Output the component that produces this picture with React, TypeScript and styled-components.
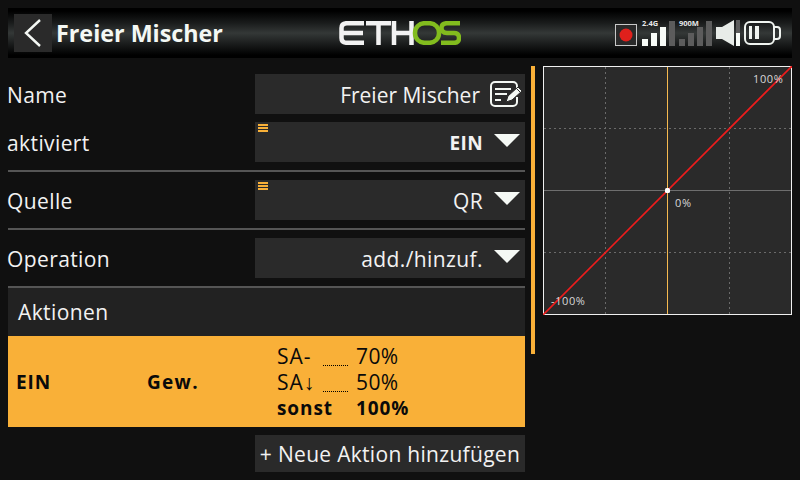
import React from "react";
import styled, { createGlobalStyle } from "styled-components";

const GlobalStyle = createGlobalStyle`
  html, body {
    margin: 0;
    padding: 0;
    background: #101010;
  }
`;

const Screen = styled.div`
  width: 800px;
  height: 480px;
  box-sizing: border-box;
  padding: 8px;
  background: #101010;
  color: #f2f2f2;
  font-family: "Open Sans", "Noto Sans", sans-serif;
  overflow: hidden;
`;

const Header = styled.header`
  display: grid;
  grid-template-columns: 1fr auto 1fr;
  align-items: center;
  height: 50px;
  background: linear-gradient(180deg, #000 0%, #000 6%, #1a1c1c 30%, #343837 50%, #1a1c1c 72%, #000 94%, #000 100%);
`;

const TitleGroup = styled.div`
  display: flex;
  align-items: center;
  gap: 4px;
  padding-left: 6px;
`;

const BackButton = styled.button`
  display: flex;
  align-items: center;
  justify-content: center;
  width: 38px;
  height: 38px;
  padding: 0;
  border: none;
  background: #2a2a2a;
`;

const Title = styled.h1`
  margin: 0;
  font-size: 23.3px;
  font-weight: 700;
  color: #f4f8f4;
`;

const Status = styled.div`
  display: flex;
  align-items: center;
  justify-content: flex-end;
  gap: 4px;
  padding-right: 11px;
`;

const StatusIcon = styled.svg`
  display: block;
  overflow: visible;
`;

const RecordBox = styled(StatusIcon)`
  margin: 3px 1px 0 0;
`;

const StatusLabel = styled.text`
  font-family: "Open Sans", "Noto Sans", sans-serif;
  font-size: 7.5px;
  font-weight: 700;
  fill: #e8e8e8;
`;

const Body = styled.main`
  display: flex;
  margin-top: 8px;
`;

const Form = styled.section`
  width: 517px;
`;

const Row = styled.div<{ $divider?: boolean }>`
  display: flex;
  align-items: center;
  justify-content: space-between;
  padding: ${({ $divider }) => ($divider ? "8px 0" : "8px 0 0")};
  border-bottom: ${({ $divider }) => ($divider ? "2px solid #555" : "none")};
`;

const Label = styled.span`
  margin: 2px 0 0 -1px;
  font-size: 21px;
  letter-spacing: 0.4px;
  color: #f2f2f2;
`;

const Field = styled.div`
  position: relative;
  display: flex;
  align-items: center;
  justify-content: flex-end;
  gap: 10px;
  box-sizing: border-box;
  width: 270px;
  height: 40px;
  padding-right: 2px;
  background: #2a2a2a;
  font-size: 21px;
`;

const DropField = styled(Field)`
  gap: 11px;
  padding-right: 5px;
  letter-spacing: 0.4px;
`;

const FieldValue = styled.span<{ $bold?: boolean }>`
  margin-top: 1px;
  font-weight: ${({ $bold }) => ($bold ? 700 : 400)};
  font-size: ${({ $bold }) => ($bold ? "19px" : "21px")};
`;

const Caret = styled.span`
  width: 0;
  height: 0;
  margin-bottom: 3px;
  border-left: 13px solid transparent;
  border-right: 13px solid transparent;
  border-top: 13px solid #f5f9f5;
`;

const Marker = styled.span`
  position: absolute;
  top: 2px;
  left: 3px;
  width: 10px;
  height: 8px;
  background: repeating-linear-gradient(180deg, #f8b038 0 2px, #2a2a2a 2px 3px);
`;

const SectionTitle = styled.div`
  display: flex;
  align-items: center;
  box-sizing: border-box;
  height: 48px;
  padding-left: 10px;
  background: #222;
  font-size: 21px;
  letter-spacing: 0.4px;
`;

const ActionRow = styled.div`
  display: grid;
  grid-template-columns: 131px 130px 1fr;
  align-items: center;
  box-sizing: border-box;
  height: 91px;
  padding-left: 8px;
  background: #f9b038;
  color: #0a0a0a;
`;

const Strong = styled.span<{ $wide?: boolean }>`
  font-weight: 700;
  font-size: 19px;
  letter-spacing: ${({ $wide }) => ($wide ? "1.3px" : "0.9px")};
`;

const Weights = styled.div`
  display: grid;
  grid-template-columns: 79px auto;
  grid-auto-rows: 26px;
  align-items: center;
  justify-content: start;
`;

const Condition = styled.span`
  display: flex;
  align-items: flex-end;
  padding-right: 8px;
  font-size: 21px;
  letter-spacing: 1px;
`;

const Dots = styled.span`
  flex: 0 0 25px;
  height: 0;
  margin: 0 0 4px auto;
  border-bottom: 1px dotted #000;
`;

const Percent = styled.span`
  font-size: 21px;
  letter-spacing: 0.4px;
`;

const AddRow = styled.div`
  display: flex;
  justify-content: flex-end;
  padding-top: 8px;
`;

const AddButton = styled.button`
  width: 270px;
  height: 37px;
  padding: 0;
  border: none;
  background: #2a2a2a;
  color: #f2f2f2;
  font-family: inherit;
  font-size: 21px;
  letter-spacing: 0.3px;
  white-space: nowrap;
`;

const ScrollBar = styled.div`
  width: 4px;
  height: 288px;
  margin-left: 6px;
  background: #f9b038;
`;

const Chart = styled.svg`
  display: block;
  margin-left: 8px;
  background: #2a2a2a;
`;

const ChartText = styled.text`
  font-family: "Open Sans", "Noto Sans", sans-serif;
  font-size: 11px;
  letter-spacing: 0.6px;
  fill: #d8d8d8;
`;

const BackIcon = () => (
  <svg width="20" height="30" viewBox="0 0 20 30">
    <path d="M17 2 L3 15 L17 28" fill="none" stroke="#f4f8f4" strokeWidth="2.4" />
  </svg>
);

const EditIcon = () => (
  <svg width="33" height="26" viewBox="0 0 33 26">
    <path
      d="M27 7V5a4 4 0 0 0-4-4H5a4 4 0 0 0-4 4v16a4 4 0 0 0 4 4h18a4 4 0 0 0 4-4V16"
      fill="none"
      stroke="#f4f8f4"
      strokeWidth="2"
    />
    <path d="M5 8h16M5 13h12M5 19h6" stroke="#f4f8f4" strokeWidth="2" />
    <path d="M16 21l2-6L28 6l4 4L22 19z" fill="#f4f8f4" stroke="#2a2a2a" strokeWidth="1" />
    <path d="M26.5 7.5l4 4" stroke="#2a2a2a" strokeWidth="1" />
  </svg>
);

const EthosLogo = () => (
  <svg width="122" height="24" viewBox="0 0 122 24" fill="none" strokeWidth="4.5">
    <g stroke="#f2f2f2">
      <path d="M25 2.2H8Q2.5 2.2 2.5 7V17Q2.5 21.8 8 21.8H25M3 12H24" />
      <path d="M27 2.2H52M39.5 2.2V24" />
      <path d="M55 0V24M72.5 0V24M55 12H72.5" />
    </g>
    <g stroke="#82bc1e">
      <rect x="76" y="2.2" width="24" height="19.6" rx="9.5" />
      <path d="M121 2.2H108Q102.5 2.2 102.5 7T108 12H115Q120 12 120 17T115 21.8H102" />
    </g>
  </svg>
);

const RecordIcon = () => (
  <RecordBox width="22" height="22" viewBox="0 0 22 22">
    <rect x="0.5" y="0.5" width="21" height="21" fill="#2a2a2a" stroke="#c8c8c8" />
    <circle cx="11" cy="11" r="6.5" fill="#e0201c" />
  </RecordBox>
);

const SignalBars = ({ lit, label }: { lit: number; label: string }) => (
  <StatusIcon width="33" height="26" viewBox="0 0 33 26">
    {[7, 13, 19, 25].map((h, i) => (
      <rect key={h} x={i * 9} y={26 - h} width="6" height={h} fill={i < lit ? "#f8fcf8" : "#5c5c5c"} />
    ))}
    <StatusLabel x="0" y="6">
      {label}
    </StatusLabel>
  </StatusIcon>
);

const Speaker = () => (
  <StatusIcon width="24" height="26" viewBox="0 0 24 26">
    <path d="M0 7H6L18 0V26L6 19H0Z" fill="#e8ece8" />
    <rect x="20" y="0" width="4" height="13" fill="#5c5c5c" />
    <rect x="20" y="13" width="4" height="13" fill="#f8fcf8" />
  </StatusIcon>
);

const Battery = () => (
  <StatusIcon width="37" height="24" viewBox="0 0 37 24">
    <rect x="1" y="1" width="29" height="22" rx="5" fill="none" stroke="#f0f4f0" strokeWidth="2" />
    <path d="M30 6h3a3 3 0 0 1 3 3v6a3 3 0 0 1-3 3h-3" fill="none" stroke="#f0f4f0" strokeWidth="2" />
    <rect x="5" y="5" width="3" height="13" fill="#f0f4f0" />
    <rect x="11" y="5" width="4" height="13" fill="#f0f4f0" />
  </StatusIcon>
);

const ResponseChart = () => (
  <Chart width="249" height="249" viewBox="0 0 249 249">
    <rect x="0.5" y="0.5" width="248" height="248" fill="none" stroke="#f0f0f0" />
    <path d="M62.5 1V248M186.5 1V248M1 62.5H248M1 186.5H248" stroke="#6a6a6a" strokeDasharray="2 3" />
    <path d="M1 124.5H248" stroke="#6e6e6e" />
    <path d="M124.5 1V248" stroke="#f6b94f" />
    <path d="M0 249L249 0" stroke="#ee1c1c" strokeWidth="1.6" />
    <rect x="122" y="122" width="5" height="5" rx="1.5" fill="#fff" />
    <ChartText x="210" y="17">100%</ChartText>
    <ChartText x="132" y="141">0%</ChartText>
    <ChartText x="8" y="239">-100%</ChartText>
  </Chart>
);

export default function App() {
  return (
    <Screen>
      <GlobalStyle />
      <Header>
        <TitleGroup>
          <BackButton>
            <BackIcon />
          </BackButton>
          <Title>Freier Mischer</Title>
        </TitleGroup>
        <EthosLogo />
        <Status>
          <RecordIcon />
          <SignalBars lit={3} label="2.4G" />
          <SignalBars lit={0} label="900M" />
          <Speaker />
          <Battery />
        </Status>
      </Header>
      <Body>
        <Form>
          <Row>
            <Label>Name</Label>
            <Field>
              <FieldValue>Freier Mischer</FieldValue>
              <EditIcon />
            </Field>
          </Row>
          <Row $divider>
            <Label>aktiviert</Label>
            <DropField>
              <Marker />
              <FieldValue $bold>EIN</FieldValue>
              <Caret />
            </DropField>
          </Row>
          <Row $divider>
            <Label>Quelle</Label>
            <DropField>
              <Marker />
              <FieldValue>QR</FieldValue>
              <Caret />
            </DropField>
          </Row>
          <Row $divider>
            <Label>Operation</Label>
            <DropField>
              <FieldValue>add./hinzuf.</FieldValue>
              <Caret />
            </DropField>
          </Row>
          <SectionTitle>Aktionen</SectionTitle>
          <ActionRow>
            <Strong>EIN</Strong>
            <Strong $wide>Gew.</Strong>
            <Weights>
              <Condition>SA-<Dots /></Condition>
              <Percent>70%</Percent>
              <Condition>SA↓<Dots /></Condition>
              <Percent>50%</Percent>
              <Strong>sonst</Strong>
              <Strong>100%</Strong>
            </Weights>
          </ActionRow>
          <AddRow>
            <AddButton>+ Neue Aktion hinzufügen</AddButton>
          </AddRow>
        </Form>
        <ScrollBar />
        <ResponseChart />
      </Body>
    </Screen>
  );
}
